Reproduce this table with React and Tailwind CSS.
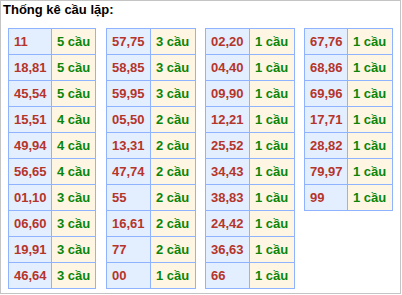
import React from "react";

const tables = [
  {
    width: "w-[88px]",
    left: "w-[43px]",
    right: "w-[44px]",
    gap: "ml-[7px]",
    rows: [
      ["11", "5 cầu"],
      ["18,81", "5 cầu"],
      ["45,54", "5 cầu"],
      ["15,51", "4 cầu"],
      ["49,94", "4 cầu"],
      ["56,65", "4 cầu"],
      ["01,10", "3 cầu"],
      ["06,60", "3 cầu"],
      ["19,91", "3 cầu"],
      ["46,64", "3 cầu"],
    ],
  },
  {
    width: "w-[90px]",
    left: "w-[44px]",
    right: "w-[45px]",
    gap: "ml-[10px]",
    rows: [
      ["57,75", "3 cầu"],
      ["58,85", "3 cầu"],
      ["59,95", "3 cầu"],
      ["05,50", "2 cầu"],
      ["13,31", "2 cầu"],
      ["47,74", "2 cầu"],
      ["55", "2 cầu"],
      ["16,61", "2 cầu"],
      ["77", "2 cầu"],
      ["00", "1 cầu"],
    ],
  },
  {
    width: "w-[90px]",
    left: "w-[44px]",
    right: "w-[45px]",
    gap: "ml-[9px]",
    rows: [
      ["02,20", "1 cầu"],
      ["04,40", "1 cầu"],
      ["09,90", "1 cầu"],
      ["12,21", "1 cầu"],
      ["25,52", "1 cầu"],
      ["34,43", "1 cầu"],
      ["38,83", "1 cầu"],
      ["24,42", "1 cầu"],
      ["36,63", "1 cầu"],
      ["66", "1 cầu"],
    ],
  },
  {
    width: "w-[89px]",
    left: "w-[43px]",
    right: "w-[45px]",
    gap: "ml-[9px]",
    rows: [
      ["67,76", "1 cầu"],
      ["68,86", "1 cầu"],
      ["69,96", "1 cầu"],
      ["17,71", "1 cầu"],
      ["28,82", "1 cầu"],
      ["79,97", "1 cầu"],
      ["99", "1 cầu"],
    ],
  },
];

const CauTable = ({ table }) => {
  return (
    <div
      className={`${table.width} ${table.gap} shrink-0 self-start border-l border-t border-[#8fb3ff]`}
    >
      {table.rows.map(([so, cau]) => (
        <div key={so} className="flex h-[26px]">
          <div
            className={`${table.left} border-r border-b border-[#8fb3ff] bg-[#e3eeff] pl-[5px] leading-[25px] font-bold text-[#b5352a]`}
          >
            {so}
          </div>
          <div
            className={`${table.right} border-r border-b border-[#8fb3ff] bg-[#fff5e3] pl-[5px] leading-[25px] font-bold text-[#0a850a]`}
          >
            {cau}
          </div>
        </div>
      ))}
    </div>
  );
};

export default function App() {
  return (
    <div
      className="w-[401px] h-[294px] border border-[#c4c4c4] bg-white text-[13px]"
      style={{ fontFamily: '"Liberation Sans", Arial, sans-serif' }}
    >
      {/* Tiêu đề */}
      <div className="h-[27px] pl-[2px] pt-[1px] leading-[16px] font-bold text-black">
        Thống kê cầu lặp:
      </div>

      <div className="flex">
        {tables.map((table, i) => (
          <CauTable key={i} table={table} />
        ))}
      </div>
    </div>
  );
}
